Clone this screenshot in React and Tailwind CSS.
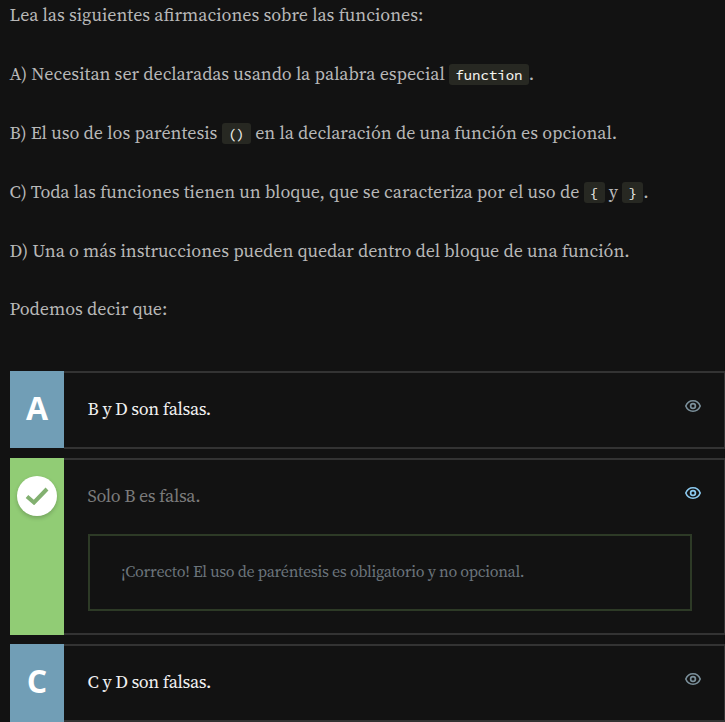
function Code({ children }) {
  return (
    <code className="inline-block h-[21px] rounded-[3px] bg-[#272822] px-[6.3px] font-['Source_Code_Pro','Liberation_Mono',monospace] text-[14px] leading-[22px] tracking-normal text-[#f8f8f2] [-webkit-text-stroke:0.1px_#f8f8f2]">
      {children}
    </code>
  );
}

function Line({ children, className = "" }) {
  return (
    <p className={`-ml-[0.5px] flex h-[21px] items-center whitespace-pre text-[18px] leading-[21px] text-[#b8b8b8] ${className}`}>
      {children}
    </p>
  );
}

function Eye({ className }) {
  return (
    <svg className={`block h-[12px] w-[16px] ${className}`} viewBox="0 0 16 12" fill="none" stroke="currentColor">
      <path d="M.8 6C2.1 2.6 4.8.8 8 .8S13.9 2.6 15.2 6C13.9 9.4 11.2 11.2 8 11.2S2.1 9.4.8 6Z" strokeWidth="1.6" />
      <circle cx="8" cy="6" r="2.4" strokeWidth="1.7" />
    </svg>
  );
}

function Option({ tile, tileClass, eyeClass, className, children }) {
  return (
    <div className={`flex w-[716px] ${className}`}>
      <div className={`flex w-[54px] shrink-0 justify-center ${tileClass}`}>{tile}</div>
      <div className="flex flex-1 flex-col border-y-2 border-r-2 border-[#333] pl-[24px] pr-[23px]">
        <div className="flex h-[73px] shrink-0 items-center justify-between">
          {children[0]}
          <Eye className={`mb-[7px] ${eyeClass}`} />
        </div>
        {children[1]}
      </div>
    </div>
  );
}

function Letter({ children }) {
  return (
    <span className="pt-[16px] font-['Open_Sans',sans-serif] text-[32px] font-bold leading-[42px] text-white">
      {children}
    </span>
  );
}

export default function App() {
  return (
    <main className="h-[722px] w-[725px] overflow-hidden bg-[#121212] pl-[10px] pt-[5px] font-['Source_Serif_4','Source_Serif_Pro','Liberation_Serif',serif]">
      <div className="flex flex-col gap-[38px]">
        <Line><span className="mb-[3px]">Lea las siguientes afirmaciones sobre las funciones:</span></Line>
        <Line>
          <span className="mb-[3px]">A) Necesitan ser declaradas usando la palabra especial </span>
          <Code>function</Code>
          <span className="mb-[3px]">.</span>
        </Line>
        <Line>
          <span className="mb-[3px]">B) El uso de los paréntesis </span>
          <Code>()</Code>
          <span className="mb-[3px]"> en la declaración de una función es opcional.</span>
        </Line>
        <Line>
          <span className="mb-[3px]">C) Toda las funciones tienen un bloque, que se caracteriza por el uso de </span>
          <Code>{"{"}</Code>
          <span className="mb-[3px]"> y </span>
          <Code>{"}"}</Code>
          <span className="mb-[3px]">.</span>
        </Line>
        <Line><span className="mb-[3px]">D) Una o más instrucciones pueden quedar dentro del bloque de una función.</span></Line>
        <Line className="-mt-px"><span className="mb-[3px]">Podemos decir que:</span></Line>
      </div>
      <div className="mt-[51px] flex flex-col">
        <Option className="h-[78px]" tile={<Letter>A</Letter>} tileClass="mb-px bg-[#719eb6]" eyeClass="text-[#7b909b]">
          <span className="-ml-[0.4px] mb-[2px] text-[18px] tracking-[-0.02em] text-[#f0f0f0]">B y D son falsas.</span>
          {null}
        </Option>
        <Option
          className="mt-[9px] h-[177px]"
          tile={
            <span className="mt-[18px] flex size-[40px] items-center justify-center rounded-full bg-white shadow-[0_2px_4px_rgba(0,0,0,0.2)]">
              <svg className="h-[18px] w-[24px]" viewBox="0 0 24 18" fill="none">
                <path d="M2 9.5L9 15.5L22 2" stroke="#82b070" strokeWidth="4" />
              </svg>
            </span>
          }
          tileClass="bg-[#91cc75]"
          eyeClass="text-[#8ccaf0]"
        >
          <span className="-ml-[0.4px] mb-[2px] text-[18px] tracking-[-0.02em] text-[#7b7b7b]">Solo B es falsa.</span>
          <div className="mt-px flex h-[77px] w-[604px] items-center border-2 border-[#2d3a26] pb-[4px] pl-[31px] text-[16px] tracking-[-0.3px] text-[#6b747b]">
            <span>¡Correcto! El uso de paréntesis es obligatorio y no opcional.</span>
          </div>
        </Option>
        <Option className="mt-[9px] h-[78px]" tile={<Letter>C</Letter>} tileClass="bg-[#719eb6]" eyeClass="text-[#7b909b]">
          <span className="-ml-[0.4px] mb-[2px] text-[18px] tracking-[-0.02em] text-[#f0f0f0]">C y D son falsas.</span>
          {null}
        </Option>
      </div>
    </main>
  );
}
